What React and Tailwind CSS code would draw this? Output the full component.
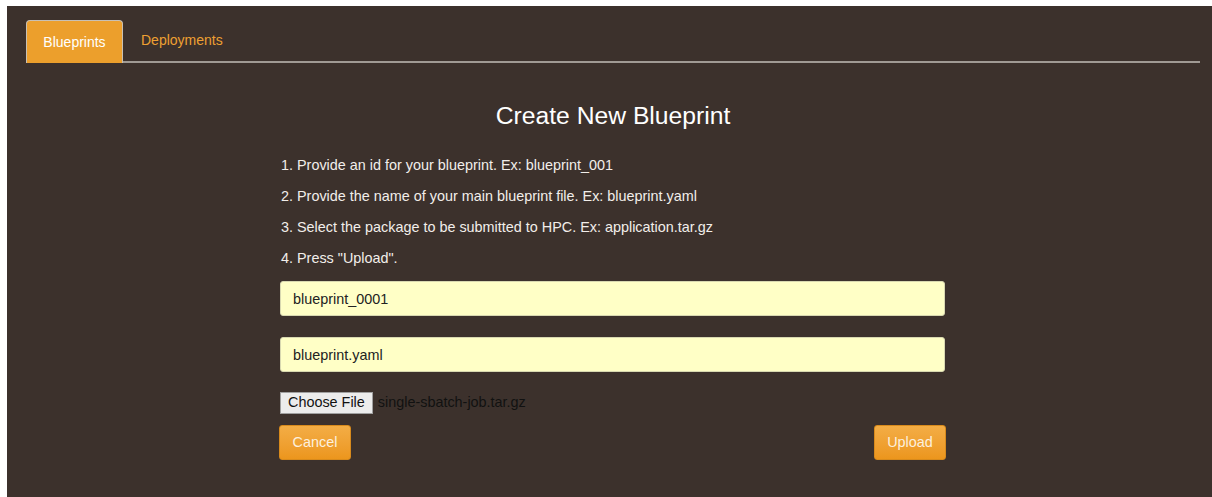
export default function App() {
  const steps = [
    '1. Provide an id for your blueprint. Ex: blueprint_001',
    '2. Provide the name of your main blueprint file. Ex: blueprint.yaml',
    '3. Select the package to be submitted to HPC. Ex: application.tar.gz',
    '4. Press "Upload".',
  ];

  return (
    <div className="min-h-[497px] bg-white pt-[6px] pl-[7px] font-['Liberation_Sans',Arial,sans-serif]">
      <div className="h-[491px] bg-[#3c312c] pt-[14px] pl-[19px] pr-[12px]">
        {/* tab bar */}
        <div className="flex h-[43px] items-end border-b-2 border-[#a09a94]">
          <div className="mb-[-2px] flex h-[43px] w-[97px] items-center justify-center rounded-t-[4px] border border-b-0 border-[#c8c0b4] bg-[#ec9f2c] text-[14px] text-white">
            Blueprints
          </div>
          <div className="flex h-[41px] items-center px-[18px] text-[14px] text-[#eea032]">Deployments</div>
        </div>

        <h1 className="mt-[39px] text-center text-[24.7px] leading-[28px] text-white">Create New Blueprint</h1>

        <div className="mx-auto mt-[27px] w-[666px] pr-[1px]">
          <div className="flex flex-col gap-[15px] pl-[1px] text-[14.4px] leading-[16px] text-[#f2eeea]">
            {steps.map((s) => (
              <p key={s}>{s}</p>
            ))}
          </div>

          <input
            className="mt-[15px] block h-[35px] w-full rounded-[3px] border border-[#d8d8b0] bg-[#ffffc6] px-[12px] text-[14.4px] text-[#222] outline-none"
            defaultValue="blueprint_0001"
          />
          <input
            className="mt-[21px] block h-[35px] w-full rounded-[3px] border border-[#d8d8b0] bg-[#ffffc6] px-[12px] text-[14.4px] text-[#222] outline-none"
            defaultValue="blueprint.yaml"
          />

          <div className="mt-[20px] flex items-center">
            <span className="flex h-[22px] items-center border border-[#a0a0a0] bg-[#ececec] px-[7px] text-[14.4px] text-[#111]">
              Choose File
            </span>
            <span className="ml-[5px] text-[14.4px] text-[#111]">single-sbatch-job.tar.gz</span>
          </div>

          <div className="mt-[11px] flex justify-between">
            <button className="ml-[-1px] h-[35px] w-[72px] rounded-[3px] border border-[#d88a1c] bg-gradient-to-b from-[#f3ad45] to-[#ec961c] text-[14.4px] text-[#fdf0de]">
              Cancel
            </button>
            <button className="mr-[-1px] h-[35px] w-[72px] rounded-[3px] border border-[#d88a1c] bg-gradient-to-b from-[#f3ad45] to-[#ec961c] text-[14.4px] text-[#fdf0de]">
              Upload
            </button>
          </div>
        </div>
      </div>
    </div>
  );
}
